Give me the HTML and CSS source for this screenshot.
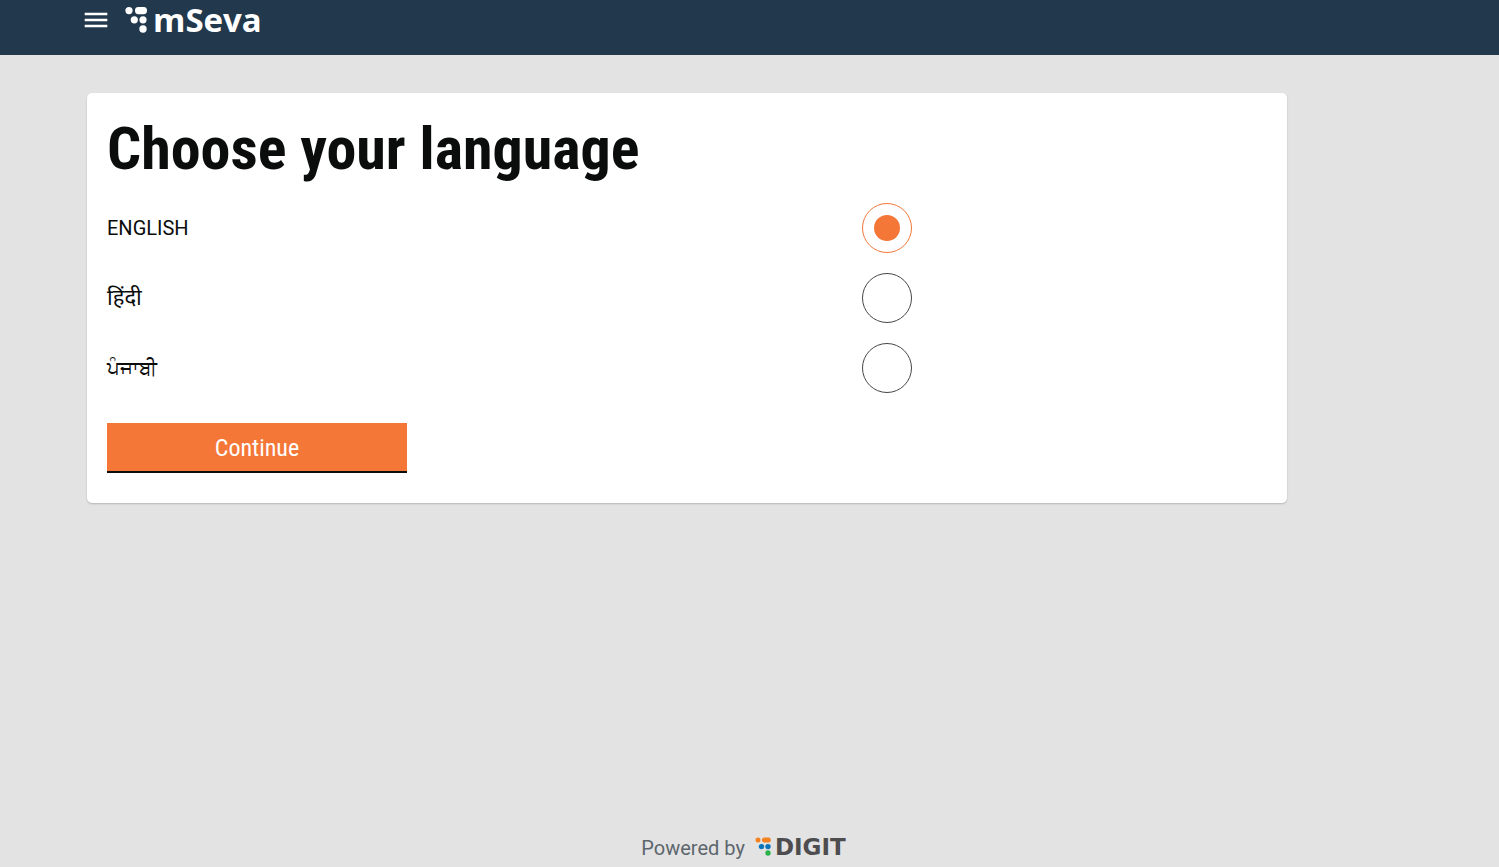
FILE: index.html
```html
<!DOCTYPE html>
<html lang="en">
<head>
<meta charset="utf-8">
<meta name="viewport" content="width=device-width, initial-scale=1">
<title>mSeva</title>
<link rel="stylesheet" href="styles.css">
</head>
<body>
<header class="topbar">
  <button class="menu-button" type="button" aria-label="Menu">
    <svg class="menu-icon" viewBox="0 0 24 16" aria-hidden="true"><path d="M.7 2h22.6M.7 8h22.6M.7 14h22.6" stroke="#fff" stroke-width="2.4"/></svg>
  </button>
  <a class="brand" href="#" aria-label="mSeva">
    <svg class="brand-mark" viewBox="0 0 22 26" fill="#fff" aria-hidden="true">
      <circle cx="4" cy="3.6" r="3.6"/><rect x="10" y="0" width="12" height="7.2" rx="3.4"/>
      <circle cx="9.3" cy="12.8" r="3.6"/><circle cx="18" cy="12.8" r="3.6"/><circle cx="18" cy="22" r="3.7"/>
    </svg>
    <span class="brand-name">mSeva</span>
  </a>
</header>
<main class="page">
  <form class="card">
    <h1 class="title">Choose your language</h1>
    <div class="options">
      <div class="option">
        <label class="option-label" for="lang-en">ENGLISH</label>
        <input class="radio" type="radio" name="language" id="lang-en" checked>
      </div>
      <div class="option">
        <label class="option-label hindi" for="lang-hi" lang="hi">हिंदी</label>
        <input class="radio" type="radio" name="language" id="lang-hi">
      </div>
      <div class="option">
        <label class="option-label" for="lang-pa" lang="pa">ਪੰਜਾਬੀ</label>
        <input class="radio" type="radio" name="language" id="lang-pa">
      </div>
    </div>
    <button class="continue" type="button">Continue</button>
  </form>
</main>
<footer class="footer">
  <span class="powered">Powered by</span>
  <a class="digit" href="#" aria-label="DIGIT">
    <svg class="digit-mark" viewBox="0 0 16 20" aria-hidden="true">
      <circle cx="3" cy="3" r="2.5" fill="#f58220"/><rect x="7" y="0.6" width="8.8" height="4.8" rx="2.2" fill="#f58220"/>
      <circle cx="6.5" cy="9.6" r="2.7" fill="#0b75bb"/><circle cx="13" cy="9.6" r="2.7" fill="#0b75bb"/>
      <circle cx="13" cy="16" r="2.7" fill="#2bb24c"/>
    </svg>
    <span class="digit-name">DIGIT</span>
  </a>
</footer>
</body>
</html>
```
FILE: styles.css
```css
* { box-sizing: border-box; }

body {
  margin: 0;
  min-height: 100vh;
  display: flex;
  flex-direction: column;
  background: #e3e3e3;
  color: #0b0c0c;
  font-family: Roboto, "Noto Sans", sans-serif;
}

.topbar {
  display: flex;
  align-items: flex-start;
  gap: 17px;
  min-height: 55px;
  padding: 0 84px;
  background: #22394d;
}

.menu-button {
  display: flex;
  margin: 12px 0 0;
  padding: 0;
  border: 0;
  background: none;
}

.menu-icon { width: 24px; height: 16px; }

.brand {
  display: flex;
  align-items: flex-start;
  gap: 6px;
  color: #fff;
  text-decoration: none;
}

.brand-mark { width: 22px; height: 26px; margin-top: 7px; }

.brand-name {
  font: 700 33px/40px "Open Sans", "Noto Sans", sans-serif;
}

.page {
  flex: 1;
  padding: 38px 87px;
}

.card {
  max-width: 1200px;
  padding: 20px 20px 30px;
  border-radius: 5px;
  background: #fff;
  box-shadow: 0 1px 2px rgba(0, 0, 0, 0.2);
}

.title {
  margin: 0 0 18px;
  font: 700 60px/72px "Roboto Condensed", "Liberation Sans Narrow", sans-serif;
}

.options { display: grid; gap: 20px; }

.option {
  display: grid;
  grid-template-columns: minmax(0, 755px) 50px;
  align-items: center;
}

.option-label {
  font-size: 20px;
  line-height: 28px;
}

.hindi { font-size: 22px; }

.radio {
  appearance: none;
  display: grid;
  place-items: center;
  width: 50px;
  height: 50px;
  margin: 0;
  border: 1px solid #464646;
  border-radius: 50%;
}

.radio:checked { border-color: #f47738; }

.radio:checked::before {
  content: "";
  width: 26px;
  height: 26px;
  border-radius: 50%;
  background: #f47738;
}

.continue {
  display: block;
  width: 300px;
  max-width: 100%;
  height: 50px;
  margin-top: 30px;
  padding: 0;
  border: 0;
  border-bottom: 2px solid #0b0c0c;
  background: #f47738;
  color: #fff;
  font: 400 24px/50px "Roboto Condensed", "Liberation Sans Narrow", sans-serif;
}

.footer {
  display: flex;
  justify-content: center;
  align-items: center;
  gap: 10px;
  padding: 0 12px 6px 0;
}

.powered {
  color: #5d666d;
  font-size: 20px;
  line-height: 26px;
}

.digit {
  display: flex;
  align-items: center;
  gap: 4px;
  margin-bottom: 2px;
  color: #4d4d4f;
  text-decoration: none;
}

.digit-mark { width: 16px; height: 20px; }

.digit-name {
  font: 700 23px/24px "DejaVu Sans", sans-serif;
}
```
